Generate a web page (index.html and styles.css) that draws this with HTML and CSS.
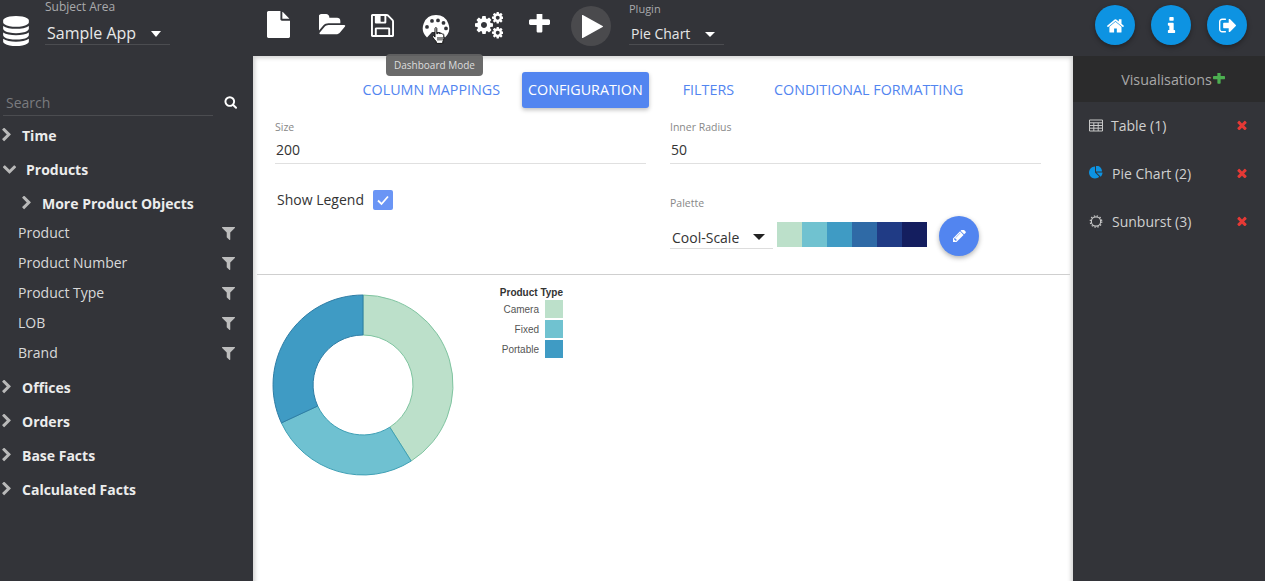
FILE: index.html
```html
<!DOCTYPE html>
<html lang="en">
<head>
<meta charset="utf-8">
<title>Visual Analyzer</title>
<link rel="stylesheet" href="styles.css">
</head>
<body>
<svg class="defs" width="0" height="0">
  <defs>
    <path id="i-chev-r" d="M1363 877l-742 742q-19 19-45 19t-45-19l-166-166q-19-19-19-45t19-45l531-531-531-531q-19-19-19-45t19-45l166-166q19-19 45-19t45 19l742 742q19 19 19 45t-19 45z"/>
    <path id="i-chev-d" d="M1683 808l-742 741q-19 19-45 19t-45-19l-742-741q-19-19-19-45.5t19-45.5l166-165q19-19 45-19t45 19l531 531 531-531q19-19 45-19t45 19l166 165q19 19 19 45.5t-19 45.5z"/>
    <path id="i-filter" d="M1595 295q17 41-14 70l-493 493v742q0 42-39 59-13 5-25 5-27 0-45-19l-256-256q-19-19-19-45v-486l-493-493q-31-29-14-70 17-39 59-39h1280q42 0 59 39z"/>
    <path id="i-x" d="M1490 1322q0 40-28 68l-136 136q-28 28-68 28t-68-28l-294-294-294 294q-28 28-68 28t-68-28l-136-136q-28-28-28-68t28-68l294-294-294-294q-28-28-28-68t28-68l136-136q28-28 68-28t68 28l294 294 294-294q28-28 68-28t68 28l136 136q28 28 28 68t-28 68l-294 294 294 294q28 28 28 68z"/>
    <path id="i-plus" d="M1600 736v192q0 40-28 68t-68 28h-416v416q0 40-28 68t-68 28h-192q-40 0-68-28t-28-68v-416h-416q-40 0-68-28t-28-68v-192q0-40 28-68t68-28h416v-416q0-40 28-68t68-28h192q40 0 68 28t28 68v416h416q40 0 68 28t28 68z"/>
    <path id="i-cog" d="M1152 896q0-106-75-181t-181-75-181 75-75 181 75 181 181 75 181-75 75-181zm512-109v222q0 12-8 23t-20 13l-185 28q-19 54-39 91 35 50 107 138 10 12 10 25t-9 23q-27 37-99 108t-94 71q-12 0-26-9l-138-108q-44 23-91 38-16 136-29 186-7 28-36 28h-222q-14 0-24.5-8.5t-11.5-21.5l-28-184q-49-16-90-37l-141 107q-10 9-25 9-14 0-25-11-126-114-165-168-7-10-7-23 0-12 8-23 15-21 51-66.5t54-70.5q-27-50-41-99l-183-27q-13-2-21-12.5t-8-23.5v-222q0-12 8-23t19-13l186-28q14-46 39-92-40-57-107-138-10-12-10-24 0-10 9-23 26-36 98.5-107.5t94.5-71.5q13 0 26 10l138 107q44-23 91-38 16-136 29-186 7-28 36-28h222q14 0 24.5 8.5t11.5 21.5l28 184q49 16 90 37l142-107q9-9 24-9 13 0 25 10 129 119 165 170 7 8 7 22 0 12-8 23-15 21-51 66.5t-54 70.5q26 50 41 98l183 28q13 2 21 12.5t8 23.5z"/>
  </defs>
</svg>

<div class="app">
  <header class="topbar">
    <div class="subject">
      <svg class="db-icon" viewBox="128 0 1536 1792"><path fill="currentColor" d="M896 768q237 0 443-43t325-127v170q0 69-103 128t-280 93.5-385 34.5-385-34.5-280-93.5-103-128v-170q119 84 325 127t443 43zm0 768q237 0 443-43t325-127v170q0 69-103 128t-280 93.5-385 34.5-385-34.5-280-93.5-103-128v-170q119 84 325 127t443 43zm0-384q237 0 443-43t325-127v170q0 69-103 128t-280 93.5-385 34.5-385-34.5-280-93.5-103-128v-170q119 84 325 127t443 43zm0-1152q208 0 385 34.5t280 93.5 103 128v128q0 69-103 128t-280 93.5-385 34.5-385-34.5-280-93.5-103-128v-128q0-69 103-128t280-93.5 385-34.5z"/></svg>
      <div class="subject-field">
        <span class="mini-label mini-label-lg">Subject Area</span>
        <div class="select select-subject"><span>Sample App</span><i class="caret"></i></div>
      </div>
    </div>

    <nav class="tools">
      <svg class="tool tool-file" viewBox="128 0 1536 1792"><path d="M1152 512v-472q22 14 36 28l408 408q14 14 28 36h-472zm-128 32q0 40 28 68t68 28h544v1056q0 40-28 68t-68 28h-1344q-40 0-68-28t-28-68v-1600q0-40 28-68t68-28h800v544z"/></svg>
      <svg class="tool tool-folder" viewBox="0 128 1920 1536"><path d="M1815 952q0 31-31 66l-336 396q-43 51-120.5 86.5t-143.5 35.5h-1088q-34 0-60.5-13t-26.5-43q0-31 31-66l336-396q43-51 120.5-86.5t143.5-35.5h1088q34 0 60.5 13t26.5 43zm-343-344v160h-832q-94 0-197 47.5t-164 119.5l-337 396-5 6q0-4-.5-12.5t-.5-12.5v-960q0-92 66-158t158-66h320q92 0 158 66t66 158v32h544q92 0 158 66t66 158z"/></svg>
      <svg class="tool tool-save" viewBox="128 128 1536 1536"><path d="M512 1536h768v-384h-768v384zm896 0h128v-896q0-14-10-38.5t-20-34.5l-281-281q-10-10-34-20t-39-10v416q0 40-28 68t-68 28h-576q-40 0-68-28t-28-68v-416h-128v1280h128v-416q0-40 28-68t68-28h832q40 0 68 28t28 68v416zm-384-928v-320q0-13-9.5-22.5t-22.5-9.5h-192q-13 0-22.5 9.5t-9.5 22.5v320q0 13 9.5 22.5t22.5 9.5h192q13 0 22.5-9.5t9.5-22.5zm640 32v928q0 40-28 68t-68 28h-1344q-40 0-68-28t-28-68v-1344q0-40 28-68t68-28h928q40 0 88 20t76 48l280 280q28 28 48 76t20 88z"/></svg>
      <div class="palette-wrap">
        <svg class="tool tool-palette" viewBox="0 0 28 28"><path fill-rule="evenodd" d="M14 2A13 13 0 0 0 5 24.500L10 19h8l5 5.500A13 13 0 0 0 14 2zM5 12a1.900 1.900 0 1 1 0 3.800A1.900 1.900 0 0 1 5 12zM10 6a1.900 1.900 0 1 1 0 3.800A1.900 1.900 0 0 1 10 6zM16 5.500a1.900 1.900 0 1 1 0 3.800 1.900 1.900 0 0 1 0-3.800zM21.500 8a1.900 1.900 0 1 1 0 3.800 1.900 1.900 0 0 1 0-3.800zM24 13.500a1.900 1.900 0 1 1 0 3.800 1.900 1.900 0 0 1 0-3.800z"/></svg>
        <svg class="hand" viewBox="0 0 13 17"><path d="M3.500 1.500c0-1.200 1.800-1.200 1.800 0v5.300l.9-.2c.1-1 1.700-1 1.800 0l.7.100c.2-.8 1.500-.7 1.700.2l.5.200c.5-.4 1.400-.1 1.400.7v3.700c0 1.400-.5 2.300-1 3.100v1.800H4.800v-1.600C3.700 13.600 2.400 11.900 1.200 10.200c-.8-1.100.6-2.100 1.400-1.100l.9 1z" fill="#fff" stroke="#111"/><path d="M6.500 10v3.500M8.500 10v3.500M10.500 10v3.500" stroke="#111" fill="none"/></svg>
        <div class="tooltip">Dashboard Mode</div>
      </div>
      <svg class="tool tool-cogs" viewBox="0 0 28 28">
        <use href="#i-cog" transform="translate(-1.500 3.500) scale(.0117)"/>
        <use href="#i-cog" transform="translate(16 0) scale(.0075)"/>
        <use href="#i-cog" transform="translate(16 15) scale(.0075)"/>
      </svg>
      <svg class="tool tool-plus" viewBox="192 288 1408 1408"><use href="#i-plus"/></svg>
      <div class="play"><svg viewBox="192 128 1408 1536"><path d="M1576 927l-1328 738q-23 13-39.500 3t-16.500-36v-1472q0-26 16.500-36t39.500 3l1328 738q23 13 23 31t-23 31z"/></svg></div>
      <div class="plugin">
        <span class="mini-label">Plugin</span>
        <div class="select select-plugin"><span>Pie Chart</span><i class="caret caret-small"></i></div>
      </div>
    </nav>

    <div class="round-buttons">
      <button class="round"><svg viewBox="90 190 1620 1340"><path d="M1472 992v480q0 26-19 45t-45 19h-384v-384h-256v384h-384q-26 0-45-19t-19-45v-480q0-1 .5-3t.5-3l575-474 575 474q1 2 1 6zm223-69l-62 74q-8 9-21 11h-3q-13 0-21-7l-692-577-692 577q-12 8-24 7-13-2-21-11l-62-74q-8-10-7-23.500t11-21.500l719-599q32-26 76-26t76 26l244 204v-195q0-14 9-23t23-9h192q14 0 23 9t9 23v408l219 182q10 8 11 21.500t-7 23.500z"/></svg></button>
      <button class="round"><svg class="ico-info" viewBox="512 128 768 1408"><path d="M1216 1344v128q0 26-19 45t-45 19h-512q-26 0-45-19t-19-45v-128q0-26 19-45t45-19h64v-384h-64q-26 0-45-19t-19-45v-128q0-26 19-45t45-19h384q26 0 45 19t19 45v576h64q26 0 45 19t19 45zm-128-1152v192q0 26-19 45t-45 19h-256q-26 0-45-19t-19-45v-192q0-26 19-45t45-19h256q26 0 45 19t19 45z"/></svg></button>
      <button class="round"><svg viewBox="64 256 1568 1280"><path d="M704 1440q0 4 1 20t.5 26.500-3 23.500-10 19.500-20.500 6.500h-320q-119 0-203.500-84.500t-84.500-203.500v-704q0-119 84.500-203.500t203.500-84.500h320q13 0 22.500 9.500t9.500 22.500q0 4 1 20t.5 26.500-3 23.500-10 19.500-20.500 6.500h-320q-66 0-113 47t-47 113v704q0 66 47 113t113 47h312l11.500 1 11.500 3 8 5.500 7 9 2 13.500zm928-544q0 26-19 45l-544 544q-19 19-45 19t-45-19-19-45v-288h-448q-26 0-45-19t-19-45v-384q0-26 19-45t45-19h448v-288q0-26 19-45t45-19 45 19l544 544q19 19 19 45z"/></svg></button>
    </div>
  </header>

  <div class="body-row">
    <aside class="sidebar">
      <div class="search">
        <span>Search</span>
        <svg viewBox="0 128 1728 1664"><path d="M1216 832q0-185-131.500-316.500t-316.500-131.500-316.500 131.500-131.500 316.500 131.500 316.500 316.500 131.500 316.500-131.500 131.500-316.500zm512 832q0 52-38 90t-90 38q-54 0-90-38l-343-342q-179 124-399 124-143 0-273.500-55.500t-225-150-150-225-55.500-273.500 55.500-273.500 150-225 225-150 273.500-55.500 273.500 55.500 225 150 150 225 55.500 273.500q0 220-124 399l343 343q37 37 37 90z"/></svg>
      </div>
      <ul class="tree">
        <li class="group"><svg class="chev" viewBox="320 128 1088 1536"><use href="#i-chev-r"/></svg><span>Time</span></li>
        <li class="group"><svg class="chev-d" viewBox="128 384 1536 1216"><use href="#i-chev-d"/></svg><span>Products</span></li>
        <li class="group group-sub"><svg class="chev" viewBox="320 128 1088 1536"><use href="#i-chev-r"/></svg><span>More Product Objects</span></li>
        <li class="leaf leaf-first"><span>Product</span><svg viewBox="192 256 1408 1408"><use href="#i-filter"/></svg></li>
        <li class="leaf"><span>Product Number</span><svg viewBox="192 256 1408 1408"><use href="#i-filter"/></svg></li>
        <li class="leaf"><span>Product Type</span><svg viewBox="192 256 1408 1408"><use href="#i-filter"/></svg></li>
        <li class="leaf"><span>LOB</span><svg viewBox="192 256 1408 1408"><use href="#i-filter"/></svg></li>
        <li class="leaf"><span>Brand</span><svg viewBox="192 256 1408 1408"><use href="#i-filter"/></svg></li>
        <li class="group group-after"><svg class="chev" viewBox="320 128 1088 1536"><use href="#i-chev-r"/></svg><span>Offices</span></li>
        <li class="group"><svg class="chev" viewBox="320 128 1088 1536"><use href="#i-chev-r"/></svg><span>Orders</span></li>
        <li class="group"><svg class="chev" viewBox="320 128 1088 1536"><use href="#i-chev-r"/></svg><span>Base Facts</span></li>
        <li class="group"><svg class="chev" viewBox="320 128 1088 1536"><use href="#i-chev-r"/></svg><span>Calculated Facts</span></li>
      </ul>
    </aside>

    <main class="main">
      <div class="tabs">
        <a class="tab tab-first">COLUMN MAPPINGS</a>
        <a class="tab tab-active">CONFIGURATION</a>
        <a class="tab">FILTERS</a>
        <a class="tab">CONDITIONAL FORMATTING</a>
      </div>

      <section class="config">
        <div class="field">
          <span class="field-label">Size</span>
          <div class="field-value">200</div>
        </div>
        <div class="field">
          <span class="field-label">Inner Radius</span>
          <div class="field-value">50</div>
        </div>
        <div class="legend-toggle">
          <span class="legend-text">Show Legend</span>
          <span class="checkbox"><svg viewBox="0 0 20 20"><path d="M5 10.500l3.500 3.500 6.500-7.500" fill="none" stroke="#fff" stroke-width="1.800"/></svg></span>
        </div>
        <div class="palette-field">
          <span class="field-label">Palette</span>
          <div class="palette-row">
            <div class="select select-palette"><span>Cool-Scale</span><i class="caret caret-dark"></i></div>
            <div class="swatches">
              <i class="sw sw1"></i><i class="sw sw2"></i><i class="sw sw3"></i><i class="sw sw4"></i><i class="sw sw5"></i><i class="sw sw6"></i>
            </div>
            <button class="fab"><svg viewBox="128 256 1536 1536"><path d="M491 1536l91-91-235-235-91 91v107h128v128h107zm523-928q0-22-22-22-10 0-17 7l-542 542q-7 7-7 17 0 22 22 22 10 0 17-7l542-542q7-7 7-17zm-54-192l416 416-832 832h-416v-416zm683 96q0 53-37 90l-166 166-416-416 166-165q36-38 90-38 53 0 91 38l235 234q37 39 37 91z"/></svg></button>
          </div>
        </div>
      </section>

      <section class="chart">
        <svg width="320" height="210" viewBox="0 0 320 210">
          <g transform="translate(106 110)">
            <path class="slice s1" d="M0 -90A90 90 0 0 1 48.200 76L26.800 42.200A50 50 0 0 0 0 -50Z"/>
            <path class="slice s2" d="M48.200 76A90 90 0 0 1 -81.600 37.900L-45.300 21A50 50 0 0 0 26.800 42.200Z"/>
            <path class="slice s3" d="M-81.600 37.900A90 90 0 0 1 0 -90L0 -50A50 50 0 0 0 -45.300 21Z"/>
          </g>
          <text class="lg-title" x="306" y="21">Product Type</text>
          <text class="lg-label" x="282" y="38">Camera</text>
          <text class="lg-label" x="282" y="58">Fixed</text>
          <text class="lg-label" x="282" y="78">Portable</text>
          <rect class="lg1" x="288" y="25" width="18" height="18"/>
          <rect class="lg2" x="288" y="45" width="18" height="18"/>
          <rect class="lg3" x="288" y="65" width="18" height="18"/>
        </svg>
      </section>
    </main>

    <aside class="vis">
      <div class="vis-head"><span>Visualisations</span><svg viewBox="192 288 1408 1408"><use href="#i-plus"/></svg></div>
      <div class="vis-item">
        <svg class="vis-ico vis-table" viewBox="0 0 14 12"><path d="M.5.500h13v11H.500zM.5 3.300h13M.5 6h13M.5 8.700h13M4.800 3.300v8.200M9.200 3.300v8.200" fill="none" stroke="currentColor"/></svg>
        <span class="vis-name vis-name-tight">Table (1)</span>
        <svg class="vis-x" viewBox="256 256 1280 1280"><use href="#i-x"/></svg>
      </div>
      <div class="vis-item">
        <svg class="vis-ico vis-pie" viewBox="0 128 1792 1664"><path d="M768 890l546 546q-106 108-247.500 168t-298.500 60q-209 0-385.500-103t-279.500-279.500-103-385.500 103-385.500 279.500-279.500 385.500-103v762zm187 6h773q0 157-60 298.500t-168 247.500zm709-128h-768v-768q209 0 385.500 103t279.500 279.500 103 385.500z"/></svg>
        <span class="vis-name">Pie Chart (2)</span>
        <svg class="vis-x" viewBox="256 256 1280 1280"><use href="#i-x"/></svg>
      </div>
      <div class="vis-item">
        <svg class="vis-ico vis-sun" viewBox="0 0 14 14"><circle cx="7" cy="7" r="5" fill="none" stroke="currentColor" stroke-width="1.200"/><circle cx="7" cy="7" r="6.200" fill="none" stroke="currentColor" stroke-width="1.300" stroke-dasharray="1.500 1.750"/></svg>
        <span class="vis-name">Sunburst (3)</span>
        <svg class="vis-x" viewBox="256 256 1280 1280"><use href="#i-x"/></svg>
      </div>
    </aside>
  </div>
</div>
</body>
</html>
```

FILE: styles.css
```css
* { box-sizing: border-box; }
html, body { margin: 0; padding: 0; height: 100%; overflow: hidden; }
body { font-family: "Open Sans", "Liberation Sans", sans-serif; background: #333439; color: #e6e6e6; }
.defs { position: absolute; }
.app { display: flex; flex-direction: column; height: 581px; }

/* top bar */
.topbar { display: flex; height: 56px; flex: none; background: #333439; }
.subject { display: flex; width: 253px; flex: none; }
.db-icon { width: 26px; height: 30px; margin: 16px 0 0 3px; color: #fff; flex: none; }
.subject-field { margin-left: 16px; }
.mini-label { display: block; font-size: 11px; line-height: 14px; color: #a9aaac; }
.mini-label-lg { font-size: 12px; }
.select { display: flex; align-items: center; justify-content: space-between; border-bottom: 1px solid #4b4c50; }
.select-subject { width: 125px; height: 31px; font-size: 16px; padding: 8px 9px 0 2px; color: #e8e8e8; }
.caret { width: 0; height: 0; border-left: 5px solid transparent; border-right: 5px solid transparent; border-top: 6px solid #fff; margin-top: 2px; }
.caret-small { border-top-width: 5px; }
.caret-dark { border-left-width: 6px; border-right-width: 6px; border-top: 6px solid #222; margin-top: -1px; }

.tools { display: flex; flex: 1; align-items: flex-start; position: relative; }
.tool { fill: #fff; display: block; flex: none; }
.tool-file { width: 23px; height: 27px; margin: 11px 0 0 14px; }
.tool-folder { width: 28px; height: 22px; margin: 14px 0 0 29px; }
.tool-save { width: 23px; height: 23px; margin: 14px 0 0 24px; }
.palette-wrap { position: relative; width: 28px; height: 40px; margin-left: 28px; flex: none; }
.tool-palette { width: 28px; height: 28px; margin-top: 13px; }
.hand { position: absolute; left: 9px; top: 27px; width: 14px; height: 17px; }
.tooltip { position: absolute; left: -36px; top: 54px; width: 97px; height: 22px; background: rgba(98, 98, 98, .95); border-radius: 4px; font-size: 10px; line-height: 22px; text-align: center; color: #ddd; white-space: nowrap; z-index: 5; }
.tool-cogs { width: 28px; height: 28px; margin: 11px 0 0 25px; }
.tool-plus { width: 21px; height: 21px; margin: 14px 0 0 26px; }
.play { width: 40px; height: 40px; border-radius: 50%; background: #4a4a4d; margin: 6px 0 0 21px; flex: none; display: flex; align-items: center; justify-content: center; }
.play svg { width: 21px; height: 23px; fill: #fff; margin-left: 2px; }
.plugin { margin: 2px 0 0 18px; width: 95px; flex: none; }
.select-plugin { height: 29px; font-size: 14px; padding: 7px 9px 0 2px; }
.round-buttons { display: flex; gap: 16px; padding: 5px 18px 0 0; }
.round { width: 40px; height: 40px; border: 0; padding: 0; border-radius: 50%; background: #0d93e2; box-shadow: 0 2px 5px rgba(0, 0, 0, .35); display: flex; align-items: center; justify-content: center; }
.round svg { width: 17px; height: 15px; fill: #fff; }
.round .ico-info { width: 9px; height: 16px; }

/* main row */
.body-row { display: flex; flex: 1; min-height: 0; }
.sidebar { width: 253px; flex: none; padding-top: 36px; }
.search { display: flex; align-items: center; justify-content: space-between; width: 210px; height: 24px; margin-left: 3px; border-bottom: 1px solid #4b4c50; font-size: 14px; color: #7a7b7f; padding: 0 0 3px 3px; position: relative; }
.search svg { position: absolute; right: -24px; top: 4px; width: 13px; height: 13px; fill: #fff; }
.tree { list-style: none; margin: 2px 0 0; padding: 0; }
.group { display: flex; align-items: center; height: 34px; font-size: 14px; font-weight: 700; color: #ececec; }
.group svg { fill: #b9b9b9; flex: none; }
.chev { width: 9px; height: 14px; margin: 0 11px 0 2px; }
.chev-d { width: 13px; height: 10px; margin: 0 10px 0 3px; }
.group-sub { padding-left: 20px; }
.group-after { margin-top: 3px; }
.leaf { display: flex; align-items: center; justify-content: space-between; height: 30px; padding: 0 18px; font-size: 14px; color: #d9d9d9; }
.leaf-first { margin-top: -3px; }
.leaf svg { width: 13px; height: 13px; fill: #bdbdbd; margin-top: 2px; }

.main { flex: 1; min-width: 0; margin-bottom: -12px; background: #fff; box-shadow: inset 0 0 4px 2px #d2d2d2; color: #333; display: flex; flex-direction: column; }
.tabs { display: flex; justify-content: center; align-items: center; gap: 28px; height: 36px; margin-top: 16px; flex: none; }
.tab { color: #5285f0; font-size: 14.3px; padding: 0 6px; line-height: 36px; white-space: nowrap; }
.tab-first { margin-right: -12px; }
.tab-active { background: #5285f0; color: #fff; border-radius: 3px; box-shadow: 0 2px 4px rgba(0, 0, 0, .25); }

.config { display: grid; grid-template-columns: 371px 371px; column-gap: 24px; padding: 12px 0 0 18px; height: 167px; border-bottom: 1px solid #cfcfcf; margin: 0 3px 0 4px; flex: none; align-content: start; }
.field { height: 44px; border-bottom: 1px solid #e0e0e0; }
.field-label { display: block; font-size: 10.5px; line-height: 14px; color: #888; }
.field-value { font-size: 14px; line-height: 20px; margin-top: 6px; padding-left: 1px; color: #333; }
.legend-toggle { display: flex; align-items: center; gap: 9px; font-size: 14px; height: 20px; margin-top: 26px; padding-left: 2px; color: #333; }
.legend-text { margin-top: -2px; }
.checkbox { width: 20px; height: 20px; border-radius: 2px; background: #6a95f5; display: block; }
.checkbox svg { display: block; }
.palette-field { margin-top: 32px; }
.palette-row { display: flex; align-items: flex-start; margin-top: 12px; }
.select-palette { width: 103px; height: 27px; font-size: 14px; color: #333; border-bottom-color: #ddd; padding: 4px 8px 0 2px; }
.swatches { display: flex; margin-left: 4px; }
.sw { display: block; width: 25px; height: 25px; }
.sw1 { background: #bce0ca; }
.sw2 { background: #70c2d0; }
.sw3 { background: #3f9bc4; }
.sw4 { background: #2f6aa6; }
.sw5 { background: #203b85; }
.sw6 { background: #141e5f; }
.fab { width: 40px; height: 40px; margin: -6px 0 0 12px; border: 0; padding: 0; border-radius: 50%; background: #5285f0; box-shadow: 0 2px 5px rgba(0, 0, 0, .3); display: flex; align-items: center; justify-content: center; }
.fab svg { width: 13px; height: 13px; fill: #fff; }

.chart { padding: 0 0 0 4px; flex: 1; overflow: hidden; }
.chart svg { display: block; }
.slice { stroke-width: 1; }
.s1 { fill: #bce0ca; stroke: #7fc4a0; }
.s2 { fill: #6fc1d1; stroke: #3fa0b5; }
.s3 { fill: #3f9bc4; stroke: #2f7da5; }
.lg-title { font-family: "Liberation Sans", Arial, sans-serif; font-size: 10px; font-weight: 700; text-anchor: end; fill: #333; }
.lg-label { font-family: "Liberation Sans", Arial, sans-serif; font-size: 10px; text-anchor: end; fill: #555; }
.lg1 { fill: #bce0ca; }
.lg2 { fill: #70c2d0; }
.lg3 { fill: #3f9bc4; }

/* right panel */
.vis { width: 192px; flex: none; }
.vis-head { height: 46px; background: #2b2b2c; display: flex; align-items: center; justify-content: center; gap: 1px; font-size: 14.3px; color: #a8a8a8; padding-left: 8px; }
.vis-head svg { width: 12px; height: 12px; fill: #4caf50; }
.vis-item { display: flex; align-items: center; height: 48px; padding: 0 0 2px 16px; font-size: 14px; color: #d0d0d0; }
.vis-ico { flex: none; width: 14px; height: 13px; }
.vis-table { color: #c8c8c8; }
.vis-pie { fill: #0d93e2; height: 14px; }
.vis-sun { color: #c8c8c8; }
.vis-name { margin-left: 9px; flex: 1; }
.vis-name-tight { margin-left: 8px; }
.vis-x { width: 10px; height: 10px; fill: #e53935; margin-right: 18px; flex: none; }
```
